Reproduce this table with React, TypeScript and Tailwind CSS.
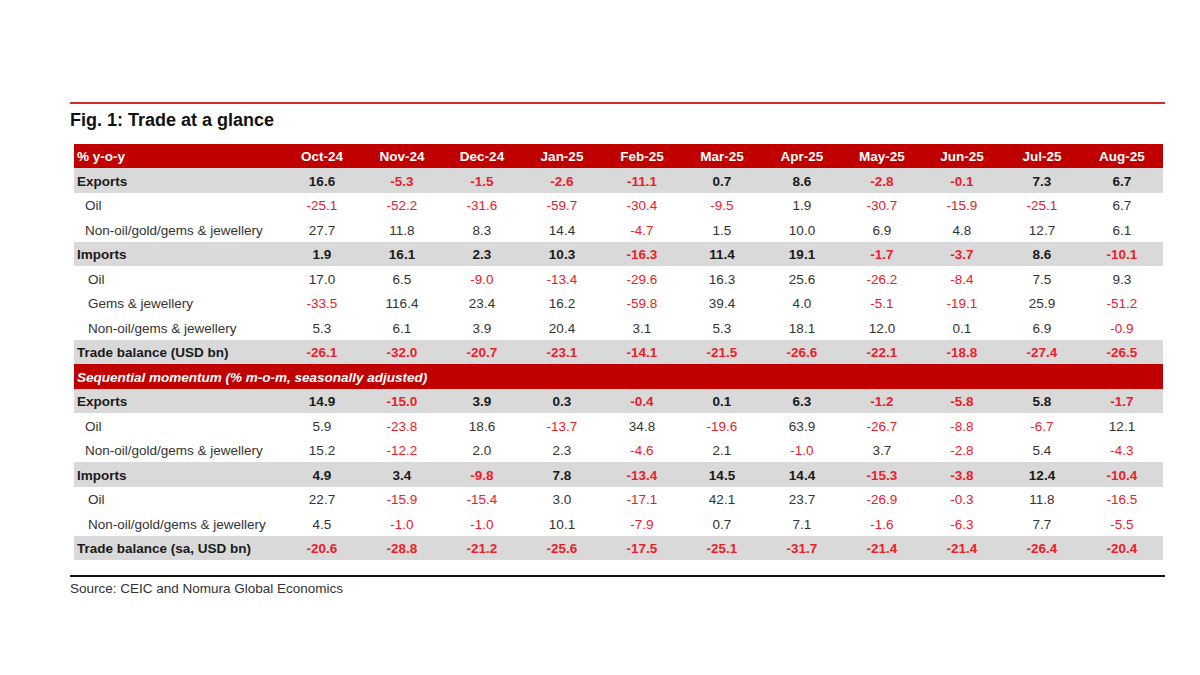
import React from 'react';

type Row = {
  label: string;
  kind: 'main' | 'sub' | 'sub2';
  values: string[];
};

const months = ['Oct-24', 'Nov-24', 'Dec-24', 'Jan-25', 'Feb-25', 'Mar-25', 'Apr-25', 'May-25', 'Jun-25', 'Jul-25', 'Aug-25'];

const yoy: Row[] = [
  { label: 'Exports', kind: 'main', values: ['16.6', '-5.3', '-1.5', '-2.6', '-11.1', '0.7', '8.6', '-2.8', '-0.1', '7.3', '6.7'] },
  { label: 'Oil', kind: 'sub', values: ['-25.1', '-52.2', '-31.6', '-59.7', '-30.4', '-9.5', '1.9', '-30.7', '-15.9', '-25.1', '6.7'] },
  { label: 'Non-oil/gold/gems & jewellery', kind: 'sub', values: ['27.7', '11.8', '8.3', '14.4', '-4.7', '1.5', '10.0', '6.9', '4.8', '12.7', '6.1'] },
  { label: 'Imports', kind: 'main', values: ['1.9', '16.1', '2.3', '10.3', '-16.3', '11.4', '19.1', '-1.7', '-3.7', '8.6', '-10.1'] },
  { label: 'Oil', kind: 'sub2', values: ['17.0', '6.5', '-9.0', '-13.4', '-29.6', '16.3', '25.6', '-26.2', '-8.4', '7.5', '9.3'] },
  { label: 'Gems & jewellery', kind: 'sub2', values: ['-33.5', '116.4', '23.4', '16.2', '-59.8', '39.4', '4.0', '-5.1', '-19.1', '25.9', '-51.2'] },
  { label: 'Non-oil/gems & jewellery', kind: 'sub2', values: ['5.3', '6.1', '3.9', '20.4', '3.1', '5.3', '18.1', '12.0', '0.1', '6.9', '-0.9'] },
  { label: 'Trade balance (USD bn)', kind: 'main', values: ['-26.1', '-32.0', '-20.7', '-23.1', '-14.1', '-21.5', '-26.6', '-22.1', '-18.8', '-27.4', '-26.5'] },
];

const mom: Row[] = [
  { label: 'Exports', kind: 'main', values: ['14.9', '-15.0', '3.9', '0.3', '-0.4', '0.1', '6.3', '-1.2', '-5.8', '5.8', '-1.7'] },
  { label: 'Oil', kind: 'sub', values: ['5.9', '-23.8', '18.6', '-13.7', '34.8', '-19.6', '63.9', '-26.7', '-8.8', '-6.7', '12.1'] },
  { label: 'Non-oil/gold/gems & jewellery', kind: 'sub', values: ['15.2', '-12.2', '2.0', '2.3', '-4.6', '2.1', '-1.0', '3.7', '-2.8', '5.4', '-4.3'] },
  { label: 'Imports', kind: 'main', values: ['4.9', '3.4', '-9.8', '7.8', '-13.4', '14.5', '14.4', '-15.3', '-3.8', '12.4', '-10.4'] },
  { label: 'Oil', kind: 'sub2', values: ['22.7', '-15.9', '-15.4', '3.0', '-17.1', '42.1', '23.7', '-26.9', '-0.3', '11.8', '-16.5'] },
  { label: 'Non-oil/gold/gems & jewellery', kind: 'sub2', values: ['4.5', '-1.0', '-1.0', '10.1', '-7.9', '0.7', '7.1', '-1.6', '-6.3', '7.7', '-5.5'] },
  { label: 'Trade balance (sa, USD bn)', kind: 'main', values: ['-20.6', '-28.8', '-21.2', '-25.6', '-17.5', '-25.1', '-31.7', '-21.4', '-21.4', '-26.4', '-20.4'] },
];

const DataRow = ({ row }: { row: Row }) => {
  const main = row.kind === 'main';
  return (
    <div className={`flex h-[24.5px] items-center pt-[3px] ${main ? 'bg-[#d9d9d9] font-bold text-[#1a1a1a]' : 'text-[#333333]'}`}>
      <div className={`w-[208px] ${main ? 'pl-[3px]' : row.kind === 'sub' ? 'pl-[11px]' : 'pl-[14px]'}`}>{row.label}</div>
      {row.values.map((v, i) => (
        <div key={i} className={`w-[80px] text-center ${v.startsWith('-') ? 'text-[#e8202a]' : ''}`}>
          {v}
        </div>
      ))}
    </div>
  );
};

export default function App() {
  return (
    <div className="min-h-[675px] bg-white pt-[102px] pl-[70px] font-['Liberation_Sans',Arial,sans-serif]">
      <div className="w-[1095px]">
        <div className="h-[2px] bg-[#d42a2a]" />
        <h1 className="mt-[6px] text-[18px] font-bold leading-[20px] text-[#111]">Fig. 1: Trade at a glance</h1>

        <div className="mt-[14px] ml-[4px] w-[1089px] text-[13.5px] leading-[16px]">
          <div className="flex h-[24px] items-center pt-[2px] bg-[#c00000] font-bold text-white">
            <div className="w-[208px] pl-[3px]">% y-o-y</div>
            {months.map(m => (
              <div key={m} className="w-[80px] text-center">{m}</div>
            ))}
          </div>
          {yoy.map((r, i) => <DataRow key={'y' + i} row={r} />)}
          <div className="flex h-[24.5px] items-center pt-[3px] bg-[#c00000] pl-[3px] font-bold italic text-white">
            Sequential momentum (% m-o-m, seasonally adjusted)
          </div>
          {mom.map((r, i) => <DataRow key={'m' + i} row={r} />)}
        </div>

        <div className="mt-[15px] h-[2px] bg-[#111]" />
        <p className="mt-[4px] text-[13.5px] leading-[16px] text-[#333]">Source: CEIC and Nomura Global Economics</p>
      </div>
    </div>
  );
}
